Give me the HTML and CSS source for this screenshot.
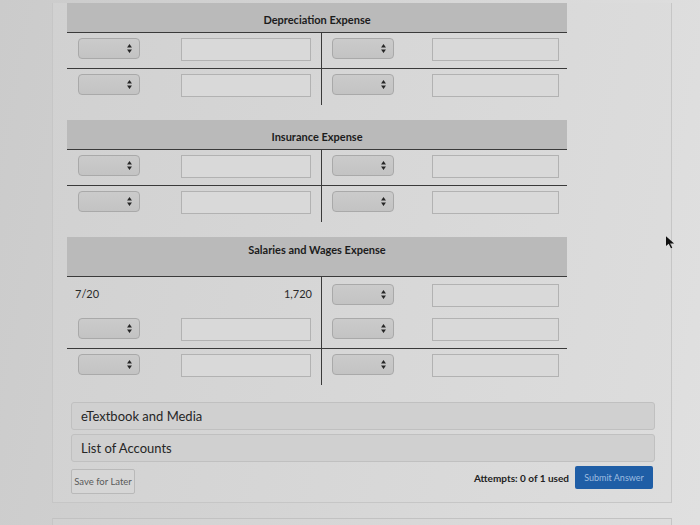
FILE: index.html
```html
<!DOCTYPE html>
<html lang="en">
<head>
<meta charset="utf-8">
<title>T-Accounts</title>
<link rel="stylesheet" href="styles.css">
</head>
<body>
<div class="card">
  <section class="taccount first">
    <div class="t-head">Depreciation Expense</div>
    <div class="t-row divided">
      <div class="cell left"><div class="sel"><svg class="arr" viewBox="0 0 6 11"><path d="M3 0L6 4.2H0zM3 11L0 6.8h6z"/></svg></div><div class="inp"></div></div>
      <div class="cell right"><div class="sel"><svg class="arr" viewBox="0 0 6 11"><path d="M3 0L6 4.2H0zM3 11L0 6.8h6z"/></svg></div><div class="inp"></div></div>
    </div>
    <div class="t-row">
      <div class="cell left"><div class="sel"><svg class="arr" viewBox="0 0 6 11"><path d="M3 0L6 4.2H0zM3 11L0 6.8h6z"/></svg></div><div class="inp"></div></div>
      <div class="cell right"><div class="sel"><svg class="arr" viewBox="0 0 6 11"><path d="M3 0L6 4.2H0zM3 11L0 6.8h6z"/></svg></div><div class="inp"></div></div>
    </div>
  </section>

  <section class="taccount">
    <div class="t-head">Insurance Expense</div>
    <div class="t-row divided">
      <div class="cell left"><div class="sel"><svg class="arr" viewBox="0 0 6 11"><path d="M3 0L6 4.2H0zM3 11L0 6.8h6z"/></svg></div><div class="inp"></div></div>
      <div class="cell right"><div class="sel"><svg class="arr" viewBox="0 0 6 11"><path d="M3 0L6 4.2H0zM3 11L0 6.8h6z"/></svg></div><div class="inp"></div></div>
    </div>
    <div class="t-row">
      <div class="cell left"><div class="sel"><svg class="arr" viewBox="0 0 6 11"><path d="M3 0L6 4.2H0zM3 11L0 6.8h6z"/></svg></div><div class="inp"></div></div>
      <div class="cell right"><div class="sel"><svg class="arr" viewBox="0 0 6 11"><path d="M3 0L6 4.2H0zM3 11L0 6.8h6z"/></svg></div><div class="inp"></div></div>
    </div>
  </section>

  <section class="taccount">
    <div class="t-head tall">Salaries and Wages Expense</div>
    <div class="t-row given">
      <div class="cell left entry"><span>7/20</span><span>1,720</span></div>
      <div class="cell right"><div class="sel"><svg class="arr" viewBox="0 0 6 11"><path d="M3 0L6 4.2H0zM3 11L0 6.8h6z"/></svg></div><div class="inp"></div></div>
    </div>
    <div class="t-row divided">
      <div class="cell left"><div class="sel"><svg class="arr" viewBox="0 0 6 11"><path d="M3 0L6 4.2H0zM3 11L0 6.8h6z"/></svg></div><div class="inp"></div></div>
      <div class="cell right"><div class="sel"><svg class="arr" viewBox="0 0 6 11"><path d="M3 0L6 4.2H0zM3 11L0 6.8h6z"/></svg></div><div class="inp"></div></div>
    </div>
    <div class="t-row">
      <div class="cell left"><div class="sel"><svg class="arr" viewBox="0 0 6 11"><path d="M3 0L6 4.2H0zM3 11L0 6.8h6z"/></svg></div><div class="inp"></div></div>
      <div class="cell right"><div class="sel"><svg class="arr" viewBox="0 0 6 11"><path d="M3 0L6 4.2H0zM3 11L0 6.8h6z"/></svg></div><div class="inp"></div></div>
    </div>
  </section>

  <div class="panel first-panel">eTextbook and Media</div>
  <div class="panel">List of Accounts</div>

  <div class="footer">
    <button class="btn-save">Save for Later</button>
    <div class="actions">
      <span class="attempts">Attempts: 0 of 1 used</span>
      <button class="btn-submit">Submit Answer</button>
    </div>
  </div>
</div>
<div class="card next"></div>

<svg class="cursor" viewBox="0 0 10 14"><path d="M0 0L0 11L3 8.5L5.5 13.5L7 12.8L4.6 8H9z"/></svg>
</body>
</html>
```

FILE: styles.css
```css
html, body {
  margin: 0;
  padding: 0;
}

body {
  width: 700px;
  height: 525px;
  overflow: hidden;
  position: relative;
  font-family: Lato, "Liberation Sans", sans-serif;
  color: #242424;
  background: linear-gradient(100deg, #cbcbcb 0%, #d3d3d3 40%, #dcdcdc 80%, #e0e0e0 100%);
}

.card {
  margin-left: 52px;
  width: 620px;
  box-sizing: border-box;
  border: 1px solid #c6c6c6;
  border-top: none;
  padding: 0 14px 8px 14px;
  background: linear-gradient(100deg, #d1d1d1 0%, #d7d7d7 50%, #dddddd 100%);
}

.card.next {
  height: 20px;
  margin-top: 15px;
  border-top: 1px solid #c2c2c2;
  padding: 0;
}

.taccount {
  width: 500px;
  margin-top: 15px;
}

.taccount.first {
  margin-top: 3px;
}

.t-head {
  height: 30px;
  box-sizing: border-box;
  background: #bababa;
  border-bottom: 1px solid #3a3a3a;
  font-size: 11px;
  font-weight: 700;
  text-align: center;
  line-height: 14px;
  padding-top: 10px;
  color: #1c1c1c;
}

.t-head.tall {
  height: 40px;
  padding-top: 6px;
}

.t-row {
  display: grid;
  grid-template-columns: 255px 1fr;
  height: 36px;
  box-sizing: border-box;
}

.t-row.divided {
  border-bottom: 1px solid #3a3a3a;
}

.cell {
  display: flex;
  justify-content: space-between;
  align-items: flex-start;
  padding-top: 5px;
}

.cell.left {
  border-right: 1px solid #3a3a3a;
  padding-left: 11px;
  padding-right: 10px;
}

.cell.right {
  padding-left: 10px;
  padding-right: 8px;
}

.t-row.given .cell {
  padding-top: 7px;
}

.cell.entry {
  padding-left: 8px;
  padding-right: 9px;
  padding-top: 10px !important;
  font-size: 11px;
  line-height: 13px;
  color: #2a2a2a;
}

.sel {
  width: 62px;
  height: 21px;
  box-sizing: border-box;
  border: 1px solid #a9a9a9;
  border-radius: 4px;
  background: linear-gradient(#cbcbcb, #c3c3c3);
  display: flex;
  align-items: center;
  justify-content: flex-end;
  padding-right: 7px;
}

.arr {
  width: 5px;
  height: 9px;
  fill: #262626;
}

.inp {
  width: 130px;
  height: 23px;
  box-sizing: border-box;
  border: 1px solid #b2b2b2;
  background: #d9d9d9;
}

.cell.right .inp {
  width: 127px;
}

.panel {
  margin-left: 4px;
  height: 28px;
  box-sizing: border-box;
  border: 1px solid #c0c0c0;
  border-radius: 3px;
  background: #d0d0d0;
  font-size: 13px;
  line-height: 26px;
  padding-left: 9px;
  margin-top: 4px;
  color: #262626;
}

.panel.first-panel {
  margin-top: 17px;
  margin-right: 2px;
}

.panel + .panel {
  margin-right: 2px;
}

.footer {
  margin-left: 4px;
  margin-top: 4px;
  display: flex;
  justify-content: space-between;
  align-items: flex-start;
}

.btn-save {
  margin-top: 3px;
  width: 64px;
  height: 25px;
  border: 1px solid #b9b9b9;
  border-radius: 2px;
  background: #d6d6d6;
  font-family: Lato, "Liberation Sans", sans-serif;
  font-size: 9.5px;
  color: #5a5a5a;
  padding: 0;
}

.actions {
  display: flex;
  align-items: center;
  gap: 6px;
  margin-right: 4px;
}

.attempts {
  font-size: 10px;
  font-weight: 700;
  color: #222;
}

.btn-submit {
  width: 78px;
  height: 23px;
  border: none;
  border-radius: 2px;
  background: #1f5ea6;
  color: #9ebde0;
  font-family: Lato, "Liberation Sans", sans-serif;
  font-size: 9px;
  padding: 0;
}

.cursor {
  position: absolute;
  left: 666px;
  top: 236px;
  width: 9px;
  height: 13px;
  fill: #111;
}
```
